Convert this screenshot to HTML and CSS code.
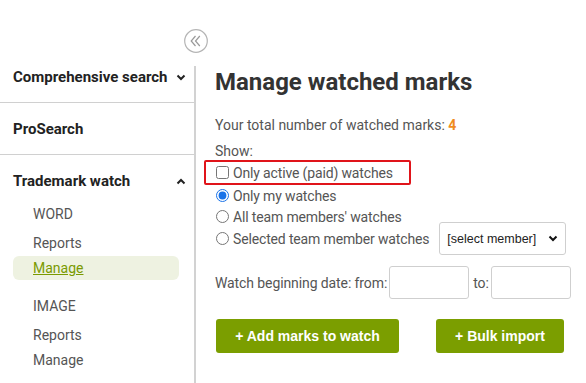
FILE: index.html
```html
<!DOCTYPE html>
<html lang="en">
<head>
    <meta charset="UTF-8">
    <title>Manage watched marks</title>
    <link rel="stylesheet" href="styles.css">
</head>
<body>
    <div class="topbar">
        <button class="collapse-btn" title="Collapse menu">
            <svg width="24" height="24" viewBox="0 0 24 24">
                <circle cx="12" cy="12" r="11.3" fill="#fff" stroke="#b5b5b5" stroke-width="1.2"/>
                <path d="M11.5 7 L7.2 12 L11.5 17 M15.8 7 L11.5 12 L15.8 17" fill="none" stroke="#9a9a9a" stroke-width="1.2"/>
            </svg>
        </button>
    </div>

    <div class="layout">
        <!-- Sidebar -->
        <nav class="sidebar">
            <div class="nav-section first">
                <div class="nav-title">
                    <span>Comprehensive search</span>
                    <svg class="chev" width="10" height="7" viewBox="0 0 10 7"><path d="M1.5 1.5 L5 5 L8.5 1.5" fill="none" stroke="#222" stroke-width="2"/></svg>
                </div>
            </div>
            <div class="nav-section">
                <div class="nav-title"><span>ProSearch</span></div>
            </div>
            <div class="nav-section open">
                <div class="nav-title">
                    <span>Trademark watch</span>
                    <svg class="chev" width="10" height="7" viewBox="0 0 10 7"><path d="M1.5 5.5 L5 2 L8.5 5.5" fill="none" stroke="#222" stroke-width="2"/></svg>
                </div>
                <ul class="sub-list">
                    <li class="sub-group">WORD</li>
                    <li class="sub-link">Reports</li>
                    <li class="sub-link active"><a href="#">Manage</a></li>
                    <li class="sub-group gap">IMAGE</li>
                    <li class="sub-link">Reports</li>
                    <li class="sub-link tight">Manage</li>
                </ul>
            </div>
        </nav>

        <!-- Main content -->
        <main class="content">
            <h1>Manage watched marks</h1>
            <p class="total">Your total number of watched marks: <b>4</b></p>
            <p class="show-label">Show:</p>

            <label class="option highlight">
                <input type="checkbox"> Only active (paid) watches
            </label>
            <label class="option">
                <input type="radio" name="who" checked> Only my watches
            </label>
            <label class="option">
                <input type="radio" name="who"> All team members' watches
            </label>
            <div class="option member-row">
                <label><input type="radio" name="who"> Selected team member watches</label>
                <div class="select-box">
                    <span>[select member]</span>
                    <svg width="10" height="7" viewBox="0 0 10 7"><path d="M1.5 1.5 L5 5 L8.5 1.5" fill="none" stroke="#111" stroke-width="2"/></svg>
                </div>
            </div>

            <div class="date-row">
                <span>Watch beginning date: from:</span>
                <input type="text" class="date-input">
                <span>to:</span>
                <input type="text" class="date-input">
            </div>

            <div class="actions">
                <button class="btn wide">+ Add marks to watch</button>
                <button class="btn">+ Bulk import</button>
            </div>
        </main>
    </div>
</body>
</html>
```

FILE: styles.css
```css
* {
    margin: 0;
    padding: 0;
    box-sizing: border-box;
}

body {
    font-family: 'Roboto', 'Liberation Sans', sans-serif;
    background-color: #ffffff;
    color: #555;
    font-size: 14px;
    overflow: hidden;
}

/* Top area with the collapse button */
.topbar {
    height: 66px;
    padding-top: 29px;
    padding-left: 184px;
}

.collapse-btn {
    border: none;
    background: none;
    width: 24px;
    height: 24px;
    display: block;
    cursor: pointer;
}

.layout {
    display: flex;
    align-items: stretch;
    min-height: 317px;
}

/* Sidebar */
.sidebar {
    width: 196px;
    flex-shrink: 0;
    border-right: 2px solid #d2d2d2;
}

.nav-section {
    border-top: 1px solid #d0d0d0;
    padding: 16px 0 15px;
}

.nav-section.first {
    border-top: none;
    padding-top: 1px;
}

.nav-section.open {
    padding-bottom: 0;
}

.nav-title {
    display: flex;
    align-items: center;
    justify-content: space-between;
    height: 20px;
    padding: 0 8px 0 13px;
    font-size: 15px;
    font-weight: bold;
    color: #222;
}

.nav-title .chev {
    margin-top: 1px;
}

.sub-list {
    list-style: none;
    margin: 13px 15px 0 13px;
}

.sub-list li {
    line-height: 20px;
    padding-left: 20px;
    font-size: 14px;
    color: #555;
}

.sub-group {
    margin-bottom: 9px;
}

.sub-group.gap {
    margin-top: 16px;
}

.sub-link {
    margin-bottom: 3px;
}

.sub-link.active {
    background-color: #eef2e1;
    border-radius: 6px;
    line-height: 24px !important;
    margin-bottom: 0;
}

.sub-link.active a {
    color: #7a9a01;
    text-decoration: underline;
}

.sub-link.tight {
    margin-top: 5px;
}

/* Main content */
.content {
    flex: 1;
    padding: 1px 0 0 19px;
}

h1 {
    font-size: 24px;
    line-height: 30px;
    font-weight: bold;
    color: #333;
    margin-bottom: 18px;
}

.total {
    line-height: 20px;
    margin-bottom: 6px;
}

.total b {
    color: #f08c1e;
}

.show-label {
    line-height: 20px;
}

.option {
    display: flex;
    align-items: center;
    height: 21px;
    line-height: 20px;
    white-space: nowrap;
    letter-spacing: -0.15px;
}

.option input {
    width: 13px;
    height: 13px;
    margin: 0 4px 0 1px;
    accent-color: #1a73e8;
}

.option.highlight {
    width: 207px;
    height: 25px;
    margin-left: -11px;
    margin-top: -1px;
    padding-left: 9px;
    border: 2px solid #e0141a;
    border-radius: 2px;
}

.member-row {
    margin-top: 1px;
}

.member-row label {
    display: flex;
    align-items: center;
}

.select-box {
    display: flex;
    align-items: center;
    justify-content: space-between;
    flex-shrink: 0;
    width: 127px;
    height: 33px;
    margin-left: 10px;
    padding: 0 7px 0 7px;
    border: 1px solid #cfcfcf;
    border-radius: 3px;
    font-family: 'Liberation Sans', Arial, sans-serif;
    font-size: 12.5px;
    letter-spacing: 0;
    color: #222;
}

.date-row {
    display: flex;
    align-items: center;
    margin-top: 17px;
    height: 33px;
    white-space: nowrap;
    letter-spacing: -0.1px;
}

.date-input {
    width: 80px;
    height: 33px;
    border: 1px solid #cfcfcf;
    border-radius: 3px;
    margin: 0 4px 0 2px;
}

.actions {
    display: flex;
    gap: 37px;
    margin-top: 20px;
    padding-left: 1px;
}

.btn {
    height: 34px;
    width: 128px;
    border: none;
    border-radius: 3px;
    background-color: #7b9e00;
    color: #fff;
    font-family: 'Liberation Sans', Arial, sans-serif;
    font-size: 14px;
    font-weight: bold;
    cursor: pointer;
}

.btn.wide {
    width: 183px;
}
```
